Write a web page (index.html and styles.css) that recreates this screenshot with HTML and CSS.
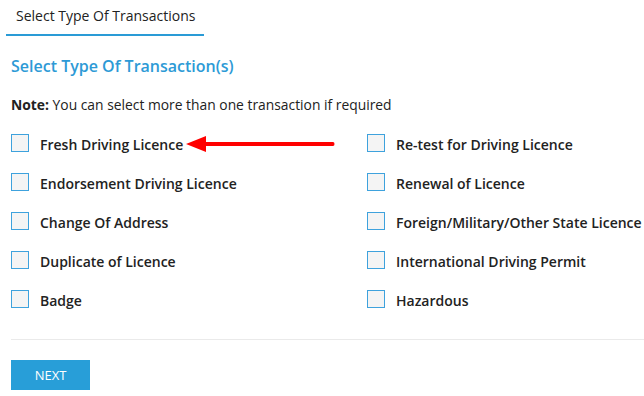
FILE: index.html
```html
<!DOCTYPE html>
<html>
<head>
<meta charset="utf-8">
<link rel="stylesheet" href="styles.css">
</head>
<body>
<div class="tabs">
  <div class="tab active">Select Type Of Transactions</div>
</div>
<div class="content">
  <h2 class="title">Select Type Of Transaction(s)</h2>
  <p class="note"><b>Note:</b> You can select more than one transaction if required</p>
  <div class="grid">
    <label class="item"><span class="box"></span><span class="lbl">Fresh Driving Licence</span>
      <span class="arrow"><svg width="150" height="18" viewBox="0 0 150 18"><path d="M1 9 L21 1 L21 7 L148 7 Q149.5 7 149.5 9 Q149.5 11 148 11 L21 11 L21 17 Z" fill="#ff0000"/></svg></span>
    </label>
    <label class="item"><span class="box"></span><span class="lbl">Re-test for Driving Licence</span></label>
    <label class="item"><span class="box"></span><span class="lbl">Endorsement Driving Licence</span></label>
    <label class="item"><span class="box"></span><span class="lbl">Renewal of Licence</span></label>
    <label class="item"><span class="box"></span><span class="lbl">Change Of Address</span></label>
    <label class="item"><span class="box"></span><span class="lbl">Foreign/Military/Other State Licence</span></label>
    <label class="item"><span class="box"></span><span class="lbl">Duplicate of Licence</span></label>
    <label class="item"><span class="box"></span><span class="lbl">International Driving Permit</span></label>
    <label class="item"><span class="box"></span><span class="lbl">Badge</span></label>
    <label class="item"><span class="box"></span><span class="lbl">Hazardous</span></label>
  </div>
  <div class="rule"></div>
  <button class="btn">NEXT</button>
</div>
</body>
</html>
```
FILE: styles.css
```css
html, body { margin: 0; padding: 0; background: #fff; }
body { font-family: "Open Sans", "Liberation Sans", sans-serif; color: #222; overflow: hidden; }
.tabs { display: flex; padding-left: 6px; height: 36px; }
.tab { font-size: 14px; color: #222; padding: 6px 10px 0 10px; width: 178px; box-sizing: content-box; height: 28px; white-space: nowrap; }
.tab.active { border-bottom: 2px solid #2a9bd6; }
.content { padding: 0 0 0 11px; }
.title { margin: 19px 0 0 0; font-size: 16px; font-weight: 600; color: #2d9ad6; line-height: 22px; }
.note { margin: 18px 0 0 0; font-size: 13.85px; line-height: 20px; color: #222; }
.note b { font-weight: 700; }
.grid { display: grid; grid-template-columns: 356px 1fr; row-gap: 21px; margin-top: 19px; }
.item { display: flex; align-items: center; height: 18px; position: relative; white-space: nowrap; }
.box { width: 16px; height: 16px; border: 1px solid #3ea2dd; background: #f4f4f4; flex: none; }
.lbl { margin-left: 11px; font-size: 14px; font-weight: 600; color: #222; position: relative; top: 1px; }
.arrow { position: absolute; left: 174px; top: 1px; line-height: 0; }
.rule { height: 1px; background: #eaeaea; margin-top: 31px; }
.btn { margin-top: 20px; width: 79px; height: 30px; border: 0; background: #289ed8; color: #fff; font-family: "Open Sans", "Liberation Sans", sans-serif; font-size: 13px; padding: 0; }
```
